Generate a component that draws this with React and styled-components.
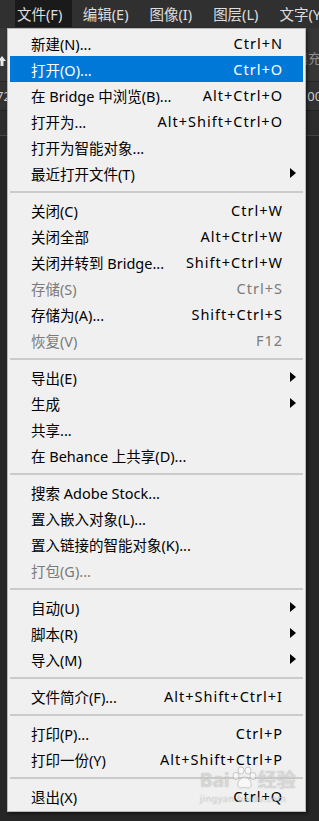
import React from 'react';
import styled, { createGlobalStyle } from 'styled-components';

const GlobalStyle = createGlobalStyle`
  html, body {
    margin: 0;
    padding: 0;
    background: #282828;
  }
  body {
    font-family: "Noto Sans", "Noto Sans CJK SC", sans-serif;
  }
`;

const titles = ['文件(F)', '编辑(E)', '图像(I)', '图层(L)', '文字(Y)'];

// null = separator
const items = [
  { label: '新建(N)...', keys: 'Ctrl+N' },
  { label: '打开(O)...', keys: 'Ctrl+O', active: true },
  { label: '在 Bridge 中浏览(B)...', keys: 'Alt+Ctrl+O' },
  { label: '打开为...', keys: 'Alt+Shift+Ctrl+O' },
  { label: '打开为智能对象...' },
  { label: '最近打开文件(T)', sub: true },
  null,
  { label: '关闭(C)', keys: 'Ctrl+W' },
  { label: '关闭全部', keys: 'Alt+Ctrl+W' },
  { label: '关闭并转到 Bridge...', keys: 'Shift+Ctrl+W' },
  { label: '存储(S)', keys: 'Ctrl+S', disabled: true },
  { label: '存储为(A)...', keys: 'Shift+Ctrl+S' },
  { label: '恢复(V)', keys: 'F12', disabled: true },
  null,
  { label: '导出(E)', sub: true },
  { label: '生成', sub: true },
  { label: '共享...' },
  { label: '在 Behance 上共享(D)...' },
  null,
  { label: '搜索 Adobe Stock...' },
  { label: '置入嵌入对象(L)...' },
  { label: '置入链接的智能对象(K)...' },
  { label: '打包(G)...', disabled: true },
  null,
  { label: '自动(U)', sub: true },
  { label: '脚本(R)', sub: true },
  { label: '导入(M)', sub: true },
  null,
  { label: '文件简介(F)...', keys: 'Alt+Shift+Ctrl+I' },
  null,
  { label: '打印(P)...', keys: 'Ctrl+P' },
  { label: '打印一份(Y)', keys: 'Alt+Shift+Ctrl+P' },
  null,
  { label: '退出(X)', keys: 'Ctrl+Q' },
];

const App = () =>
  <Page>
    <GlobalStyle />
    <MenuBar>
      {titles.map((t, i) => <MenuTitle key={t} $open={i === 0}>{t}</MenuTitle>)}
    </MenuBar>
    <OptionsBar>
      <ToolIcon viewBox="0 0 10 12">
        <path d="M5 1 L9 6 H6.5 V11 H3.5 V6 H1 Z" fill="#e8e8e8" />
      </ToolIcon>
      <OptionText>填充</OptionText>
    </OptionsBar>
    <DocTabs>
      <TabText $left>72</TabText>
      <TabText>100%</TabText>
    </DocTabs>
    <Ruler />
    <Canvas />

    <Dropdown>
      {items.map((it, i) =>
        it === null
          ? <Separator key={i} />
          : <Row key={i} $active={it.active} $disabled={it.disabled}>
              <Label>{it.label}</Label>
              <Keys>{it.keys}</Keys>
              {it.sub ? <SubArrow /> : <span />}
            </Row>
      )}
    </Dropdown>

    <Watermark>
      <WmTop>
        <span>Bai</span>
        <svg width="26" height="24" viewBox="0 0 26 24">
          <g fill="rgba(255,255,255,0.5)" stroke="rgba(120,120,120,0.45)" strokeWidth="0.8">
            <ellipse cx="5" cy="10" rx="3" ry="3.6" />
            <ellipse cx="10" cy="4.5" rx="3" ry="3.6" />
            <ellipse cx="17" cy="4.5" rx="3" ry="3.6" />
            <ellipse cx="22" cy="10" rx="3" ry="3.6" />
            <path d="M13.5 11 C9 11 6 17 7 20 C8 23 11 21.5 13.5 21.5 C16 21.5 19 23 20 20 C21 17 18 11 13.5 11 Z" />
          </g>
        </svg>
        <span>经验</span>
      </WmTop>
      <WmUrl>jingyan.baidu.com</WmUrl>
    </Watermark>
  </Page>;

const Page = styled.div`
  position: relative;
  width: 319px;
  height: 821px;
  overflow: hidden;
  background: #262626;
  display: flex;
  flex-direction: column;
`;

const MenuBar = styled.div`
  height: 28px;
  flex-shrink: 0;
  display: flex;
  padding-left: 15px;
  background: #303030;
  white-space: nowrap;
`;

const MenuTitle = styled.div`
  height: 27px;
  display: flex;
  align-items: center;
  padding: ${p => p.$open ? '0 10px 0 2px' : '0 10.5px'};
  background: ${p => p.$open ? '#1a1a1a' : 'transparent'};
  color: #dedede;
  font-size: 14.5px;
`;

const OptionsBar = styled.div`
  height: 54px;
  flex-shrink: 0;
  display: flex;
  align-items: center;
  justify-content: space-between;
  padding-top: 12px;
  box-sizing: border-box;
  background: #363636;
  border-bottom: 1px solid #262626;
`;

const ToolIcon = styled.svg`
  width: 10px;
  height: 12px;
  margin-left: -3px;
`;

const OptionText = styled.span`
  margin-right: -2px;
  margin-top: -6px;
  color: #8e8e8e;
  font-size: 13px;
`;

const DocTabs = styled.div`
  height: 28px;
  flex-shrink: 0;
  display: flex;
  align-items: center;
  justify-content: space-between;
  background: #323232;
  border-bottom: 1px solid #222;
`;

const TabText = styled.span`
  color: #cfcfcf;
  font-size: 13px;
  margin: ${p => p.$left ? '0 0 0 -4px' : '0 -14px 0 0'};
`;

const Ruler = styled.div`
  height: 24px;
  flex-shrink: 0;
  background: #2c2c2c;
  border-bottom: 1px solid #444;
`;

const Canvas = styled.div`
  flex: 1;
  background: #262626;
`;

const Dropdown = styled.div`
  position: absolute;
  top: 28px;
  left: 7px;
  width: 299px;
  box-sizing: border-box;
  padding: 1px 1px 2px;
  background: #f0f0f0;
  border: 1px solid #b8b8b8;
  box-shadow: 2px 2px 3px rgba(0, 0, 0, 0.45);
`;

const Row = styled.div`
  height: 26px;
  margin: 0 1px;
  padding-left: 21px;
  display: grid;
  grid-template-columns: 1fr auto 20px;
  align-items: center;
  background: ${p => p.$active ? '#0078d7' : 'transparent'};
  color: ${p => p.$active ? '#ffffff' : p.$disabled ? '#7b7b7b' : '#000000'};
  font-size: 14.5px;
  white-space: nowrap;
`;

const Label = styled.span`
  overflow: hidden;
`;

const Keys = styled.span`
  letter-spacing: 1px;
`;

const SubArrow = styled.span`
  justify-self: center;
  width: 0;
  height: 0;
  border-left: 6px solid #000;
  border-top: 5px solid transparent;
  border-bottom: 5px solid transparent;
`;

const Separator = styled.div`
  height: 11px;
  margin: 0 1px;
  display: flex;
  align-items: center;
  &::after {
    content: '';
    flex: 1;
    height: 2px;
    background: #cbcbcb;
  }
`;

const Watermark = styled.div`
  position: absolute;
  left: 200px;
  top: 766px;
  display: flex;
  flex-direction: column;
  align-items: flex-start;
  color: rgba(255, 255, 255, 0.5);
  text-shadow: 0 0 1px rgba(110, 110, 110, 0.55);
  pointer-events: none;
`;

const WmTop = styled.div`
  display: flex;
  align-items: flex-end;
  font-size: 19px;
  font-weight: 700;
  line-height: 1;
  gap: 1px;
`;

const WmUrl = styled.div`
  font-size: 9px;
  letter-spacing: 0.5px;
  margin-top: 2px;
`;

export default App;
